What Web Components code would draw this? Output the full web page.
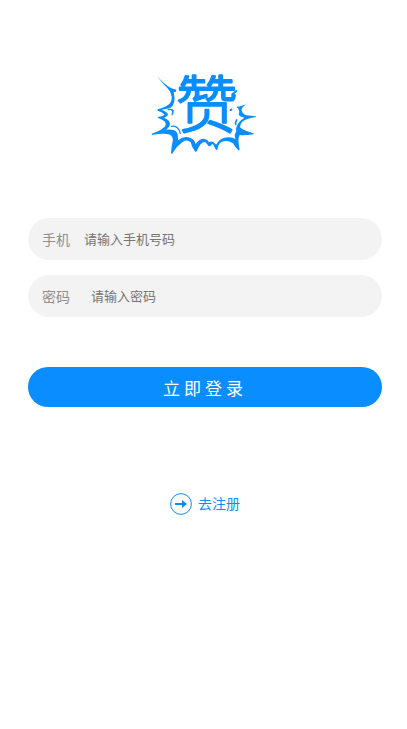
<!DOCTYPE html>
<html lang="zh-CN">
<head>
<meta charset="UTF-8">
<meta name="viewport" content="width=device-width, initial-scale=1.0">
<title>登录</title>
<style>
    body {
        margin: 0;
        background: #fff;
        font-family: "Liberation Sans", "Noto Sans CJK SC", sans-serif;
        font-size: 14px;
    }
</style>
</head>
<body>
<login-page></login-page>

<script>
class AppLogo extends HTMLElement {
    constructor() {
        super();
        this.attachShadow({ mode: 'open' });
    }

    connectedCallback() {
        this.shadowRoot.innerHTML = `
            <style>
                :host {
                    display: block;
                    width: 115px;
                    color: var(--primary-color, #0a8dff);
                }

                svg {
                    display: block;
                    width: 100%;
                    overflow: visible;
                }

                text {
                    font-family: "Noto Sans CJK SC", sans-serif;
                    font-size: 186px;
                    font-weight: 300;
                    stroke: currentColor;
                    stroke-width: 6;
                    stroke-linejoin: round;
                }
            </style>

            <svg viewBox="8 0 345 285" fill="currentColor" role="img" aria-label="赞">
                <!-- burst, left side and bottom -->
                <path d="M36 33 Q55 58 78 70 L93 74 L91 82 L85 80 Q94 119 73 130 Q60 133 49 134 Q66 141 68 148 Q67 155 56 158 Q73 164 74 176 Q73 187 62 194 Q83 191 92 199 Q99 206 98 226 Q119 210 137 220 Q148 225 151 237 Q164 219 179 222 Q188 225 191 232 Q202 224 212 239 Q226 216 250 217 Q264 218 270 222 Q264 204 279 194 Q290 194 310 201 L325 205 L325 208 Q295 212 283 210 Q276 224 283 253 L281 257 Q268 246 263 235 Q246 224 228 231 Q218 238 216 254 L212 255 L203 238 Q198 236 196 243 L190 244 L180 231 Q164 231 155 258 L150 261 Q139 247 136 232 Q125 222 112 231 Q97 240 80 267 L77 265 Q79 239 83 224 Q80 208 65 207 Q45 205 20 210 L19 206 Q44 198 58 185 Q65 178 57 169 Q50 163 38 159 L37 156 Q50 154 58 149 Q49 140 37 137 L37 133 Q52 129 65 122 Q80 114 79 95 Q77 80 66 69 Q46 51 36 33 Z"/>
                <!-- burst, right side -->
                <path d="M312 113 Q290 124 289 132 Q288 145 303 151 L332 154 L332 156 Q305 160 291 170 Q284 176 284 187 Q295 197 325 206 L280 207 Q268 200 274 184 Q279 170 297 158 Q283 156 280 148 Q284 140 279 131 L273 125 Q290 124 312 113 Z"/>
                <!-- loose strokes -->
                <g fill="none" stroke="currentColor" stroke-width="4" stroke-linecap="round">
                    <path d="M69 134 Q79 131 84 137 M80 136 Q86 142 80 149"/>
                    <path d="M79 184 Q98 180 105 205"/>
                    <path d="M274 165 Q270 170 271 178" stroke-width="5"/>
                    <path d="M262 87 L273 78" stroke-width="6"/>
                    <path d="M256 135 L258 134" stroke-width="6"/>
                </g>
                <text x="92" y="190">赞</text>
            </svg>
        `;
    }
}

class FormField extends HTMLElement {
    constructor() {
        super();
        this.attachShadow({ mode: 'open' });
    }

    connectedCallback() {
        const type = this.getAttribute('type') || 'text';
        const label = this.getAttribute('label') || '';
        const placeholder = this.getAttribute('placeholder') || '';

        this.shadowRoot.innerHTML = `
            <style>
                :host {
                    display: flex;
                    align-items: center;
                    gap: 14px;
                    height: 42px;
                    padding: 0 14px;
                    box-sizing: border-box;
                    border-radius: 21px;
                    background: #f3f3f3;
                }

                :host([type="password"]) {
                    gap: 21px;
                }

                label {
                    flex-shrink: 0;
                    color: #8f8f8f;
                }

                input {
                    flex: 1;
                    min-width: 0;
                    padding: 0;
                    border: 0;
                    outline: 0;
                    background: none;
                    color: #333;
                    font-family: inherit;
                    font-size: 13px;
                }

                input::placeholder {
                    color: #757575;
                }
            </style>

            <label for="field">${label}</label>
            <input id="field" type="${type}" placeholder="${placeholder}">
        `;
    }
}

class SubmitButton extends HTMLElement {
    constructor() {
        super();
        this.attachShadow({ mode: 'open' });
    }

    connectedCallback() {
        this.shadowRoot.innerHTML = `
            <style>
                :host {
                    display: block;
                }

                button {
                    display: block;
                    width: 100%;
                    height: 40px;
                    padding: 0;
                    border: 0;
                    border-radius: 20px;
                    background: var(--primary-color, #0a8dff);
                    color: #fff;
                    font-family: inherit;
                    font-size: 17px;
                    letter-spacing: 4px;
                    cursor: pointer;
                }
            </style>

            <button type="button"><slot></slot></button>
        `;
    }
}

class RegisterLink extends HTMLElement {
    constructor() {
        super();
        this.attachShadow({ mode: 'open' });
    }

    connectedCallback() {
        this.shadowRoot.innerHTML = `
            <style>
                :host {
                    display: block;
                }

                a {
                    display: flex;
                    align-items: center;
                    gap: 6px;
                    color: var(--primary-color, #0a8dff);
                    line-height: 22px;
                    text-decoration: none;
                }
            </style>

            <a href="#register">
                <svg width="22" height="22" viewBox="0 0 22 22" fill="none" stroke="currentColor" aria-hidden="true">
                    <circle cx="11" cy="11" r="10.4"/>
                    <path d="M5 11h10" stroke-width="2"/>
                    <path d="M12 7 L17 11 L12 15 Z" fill="currentColor" stroke="none"/>
                </svg>
                <slot></slot>
            </a>
        `;
    }
}

class LoginPage extends HTMLElement {
    constructor() {
        super();
        this.attachShadow({ mode: 'open' });
    }

    connectedCallback() {
        this.shadowRoot.innerHTML = `
            <style>
                :host {
                    --primary-color: #0a8dff;
                    display: flex;
                    flex-direction: column;
                    align-items: center;
                    padding: 65px 25px 32px 28px;
                }

                form {
                    display: flex;
                    flex-direction: column;
                    gap: 15px;
                    width: 100%;
                    margin-top: 58px;
                }

                submit-button {
                    margin-top: 35px;
                }

                register-link {
                    margin-top: 86px;
                }
            </style>

            <app-logo></app-logo>
            <form>
                <form-field type="tel" label="手机" placeholder="请输入手机号码"></form-field>
                <form-field type="password" label="密码" placeholder="请输入密码"></form-field>
                <submit-button>立即登录</submit-button>
            </form>
            <register-link>去注册</register-link>
        `;
    }
}

customElements.define('app-logo', AppLogo);
customElements.define('form-field', FormField);
customElements.define('submit-button', SubmitButton);
customElements.define('register-link', RegisterLink);
customElements.define('login-page', LoginPage);
</script>
</body>
</html>
